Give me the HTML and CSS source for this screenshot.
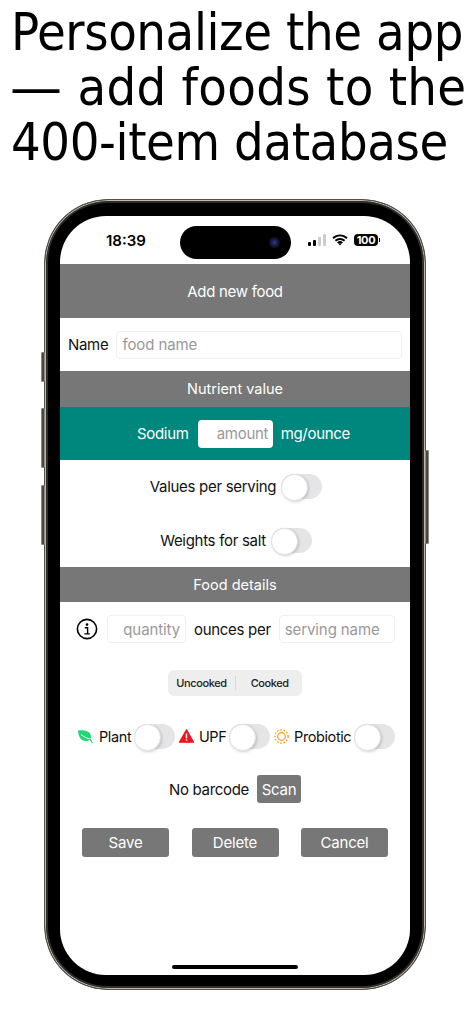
FILE: index.html
```html
<!DOCTYPE html>
<html lang="en">

<head>
  <meta charset="UTF-8">
  <meta name="viewport" content="width=device-width, initial-scale=1.0">
  <title>Add new food</title>
  <link rel="stylesheet" href="styles.css">
</head>

<body>
  <h1 class="headline">
    <div class="line line-first">Personalize the app</div>
    <div class="line line-second"><span class="dash">—</span> add foods to the</div>
    <div class="line line-third">400-item database</div>
  </h1>

  <div class="phone">
    <div class="side-btn mute"></div>
    <div class="side-btn vol-up"></div>
    <div class="side-btn vol-down"></div>
    <div class="side-btn power"></div>

    <div class="screen">
      <div class="status">
        <span class="clock">18:39</span>
        <div class="island"><span class="lens"></span></div>
        <div class="status-icons">
          <svg width="18" height="12" viewBox="0 0 18 12">
            <rect x="0" y="8" width="3" height="4" rx="1" fill="#000" />
            <rect x="5" y="6" width="3" height="6" rx="1" fill="#000" />
            <rect x="10" y="3" width="3" height="9" rx="1" fill="#ccc" />
            <rect x="15" y="0" width="3" height="12" rx="1" fill="#ccc" />
          </svg>
          <svg width="16" height="12" viewBox="0 0 16 12">
            <path d="M1 4.2a10 10 0 0 1 14 0M3.4 6.8a6.6 6.6 0 0 1 9.2 0M5.7 9a3.3 3.3 0 0 1 4.6 0" fill="none" stroke="#000" stroke-width="1.9" />
            <path d="M6.6 10l1.4-1.2 1.4 1.2L8 11.6z" fill="#000" />
          </svg>
          <div class="battery">100</div>
        </div>
      </div>

      <div class="app-title">Add new food</div>

      <div class="name-row">
        <label class="label">Name</label>
        <input class="field field-name" placeholder="food name">
      </div>

      <div class="section">Nutrient value</div>

      <div class="sodium-row">
        <span>Sodium</span>
        <input class="amount" placeholder="amount">
        <span>mg/ounce</span>
      </div>

      <div class="toggle-row">
        <span class="label">Values per serving</span>
        <span class="toggle"></span>
      </div>
      <div class="toggle-row">
        <span class="label">Weights for salt</span>
        <span class="toggle"></span>
      </div>

      <div class="section section-details">Food details</div>

      <div class="quantity-row">
        <svg class="info" width="22" height="22" viewBox="0 0 22 22">
          <circle cx="11" cy="11" r="9.6" fill="none" stroke="#000" stroke-width="1.6" />
          <circle cx="11" cy="6.6" r="1.3" fill="#000" />
          <path d="M8.8 9.7h2.8v6M8.4 15.9h5.4" fill="none" stroke="#000" stroke-width="1.4" />
        </svg>
        <input class="field field-qty" placeholder="quantity">
        <span class="label">ounces per</span>
        <input class="field field-serving" placeholder="serving name">
      </div>

      <div class="segment-row">
        <div class="segment">
          <span class="seg-item seg-first">Uncooked</span>
          <span class="seg-item seg-second">Cooked</span>
        </div>
      </div>

      <div class="flags-row">
        <svg width="17" height="15" viewBox="0 0 17 15">
          <path d="M1 1.5C6 1 12 1.5 13.5 5.5 14.5 8 14 10 13 11 9 13 4.5 12 2.8 8.5 1.8 6.5 1.2 4 1 1.5z" fill="#1fd873" />
          <path d="M4 5.5C7 8 10 9.5 14 10.2" fill="none" stroke="#fff" stroke-width="1" />
          <path d="M13 10.2L15.5 14" fill="none" stroke="#1fd873" stroke-width="1.2" />
        </svg>
        <span class="label flag-label">Plant</span>
        <span class="toggle"></span>
        <svg class="flag-icon" width="15" height="14" viewBox="0 0 15 14">
          <path d="M7.5.8L14.5 13.2H.5z" fill="#f8101c" stroke="#f8101c" stroke-width="1.2" stroke-linejoin="round" />
          <rect x="6.8" y="4.5" width="1.4" height="5" fill="#fff" />
          <rect x="6.8" y="10.3" width="1.4" height="1.5" fill="#fff" />
        </svg>
        <span class="label flag-label">UPF</span>
        <span class="toggle"></span>
        <svg class="flag-icon" width="15" height="15" viewBox="0 0 15 15">
          <circle cx="7.5" cy="7.5" r="3.8" fill="none" stroke="#f7931e" stroke-width="1.2" />
          <circle cx="7.5" cy="7.5" r="6.6" fill="none" stroke="#f7931e" stroke-width="1.3" stroke-dasharray="1.6 1.7" />
        </svg>
        <span class="label flag-label">Probiotic</span>
        <span class="toggle"></span>
      </div>

      <div class="barcode-row">
        <span class="label">No barcode</span>
        <button class="btn btn-scan">Scan</button>
      </div>

      <div class="actions">
        <button class="btn btn-action">Save</button>
        <button class="btn btn-action">Delete</button>
        <button class="btn btn-action">Cancel</button>
      </div>

      <div class="home-bar"></div>
    </div>
  </div>
</body>

</html>
```

FILE: styles.css
```css
* {
  margin: 0;
  padding: 0;
  box-sizing: border-box;
}

html,
body {
  width: 472px;
  height: 1024px;
  overflow: hidden;
  background: #fff;
}

body {
  font-family: Inter, "Liberation Sans", sans-serif;
  color: #111;
}

.headline {
  height: 199px;
  padding-top: 5px;
  font-family: "DejaVu Sans", sans-serif;
  font-stretch: condensed;
  font-weight: 400;
  font-size: 52px;
  line-height: 55px;
  color: #000;
}

.line {
  white-space: nowrap;
}

.line-first {
  padding-left: 11px;
  letter-spacing: -0.4px;
}

.line-second {
  padding-left: 10px;
  letter-spacing: 0.3px;
}

.line-third {
  padding-left: 11px;
  letter-spacing: -0.4px;
}

.dash {
  font-stretch: normal;
}

.phone {
  position: relative;
  width: 382px;
  height: 791px;
  margin-left: 44px;
  padding: 16px 15px;
  background: #000;
  border-radius: 64px;
  border: 1px solid #55524c;
  box-shadow: inset 0 0 0 1px #c0b8ac, inset 0 0 0 3px #2e2d2a;
}

.side-btn {
  position: absolute;
  width: 4px;
  background: #4a4843;
  border: 1px solid #8d877d;
  border-radius: 1px;
}

.mute {
  left: -4px;
  top: 152px;
  height: 30px;
}

.vol-up {
  left: -4px;
  top: 208px;
  height: 60px;
}

.vol-down {
  left: -4px;
  top: 285px;
  height: 60px;
}

.power {
  right: -4px;
  top: 250px;
  height: 94px;
}

.screen {
  position: relative;
  display: flex;
  flex-direction: column;
  height: 759px;
  background: #fff;
  border-radius: 46px;
  overflow: hidden;
}

.status {
  position: relative;
  flex: 0 0 48px;
}

.clock {
  position: absolute;
  left: 46px;
  top: 16px;
  font-size: 15px;
  font-weight: 600;
  line-height: 18px;
  color: #000;
}

.island {
  position: absolute;
  left: 120px;
  top: 10px;
  width: 111px;
  height: 33px;
  background: #000;
  border-radius: 17px;
}

.lens {
  position: absolute;
  right: 11px;
  top: 11px;
  width: 11px;
  height: 11px;
  border-radius: 50%;
  background: radial-gradient(circle, #2a3a8c 0%, #11122a 55%, #000 100%);
}

.status-icons {
  position: absolute;
  left: 248px;
  top: 18px;
  display: flex;
  align-items: center;
  gap: 6px;
}

.battery {
  position: relative;
  width: 24px;
  height: 12px;
  background: #000;
  border-radius: 4px;
  color: #fff;
  font-size: 11px;
  font-weight: 700;
  letter-spacing: -0.3px;
  line-height: 12px;
  text-align: center;
}

.battery::after {
  content: "";
  position: absolute;
  right: -2px;
  top: 4px;
  width: 1px;
  height: 4px;
  background: #000;
}

.app-title {
  flex: 0 0 54px;
  display: flex;
  align-items: center;
  justify-content: center;
  background: #777;
  color: #fff;
  font-size: 15px;
  letter-spacing: -0.3px;
}

.name-row {
  flex: 0 0 53px;
  display: flex;
  align-items: center;
  gap: 8px;
  padding: 0 8px;
}

.label {
  font-size: 15px;
  letter-spacing: -0.3px;
  color: #111;
  white-space: nowrap;
}

.field {
  height: 28px;
  padding: 0 5px;
  border: 1px solid #efefef;
  border-radius: 4px;
  background: #fff;
  font-family: inherit;
  font-size: 15px;
  letter-spacing: -0.1px;
  outline: none;
}

.field::placeholder,
.amount::placeholder {
  color: #999;
  opacity: 1;
}

.field-name {
  flex: 1;
  min-width: 0;
}

.section {
  flex: 0 0 36px;
  display: flex;
  align-items: center;
  justify-content: center;
  padding-bottom: 1px;
  background: #777;
  color: #fff;
  font-size: 14.5px;
}

.section-details {
  flex-basis: 35px;
}

.sodium-row {
  flex: 0 0 53px;
  display: flex;
  align-items: center;
  justify-content: center;
  gap: 7.5px;
  padding-left: 17px;
  background: #00877d;
  color: #fff;
  font-size: 15px;
  letter-spacing: -0.3px;
}

.amount {
  width: 75px;
  height: 28px;
  margin-left: 2px;
  padding: 0 5px;
  border: 0;
  border-radius: 4px;
  background: #fff;
  font-family: inherit;
  font-size: 15px;
  letter-spacing: -0.3px;
  text-align: right;
  outline: none;
}

.toggle-row {
  flex: 0 0 53.5px;
  display: flex;
  align-items: center;
  justify-content: center;
  gap: 5px;
  padding-left: 2px;
}

.toggle {
  position: relative;
  flex: none;
  display: inline-block;
  width: 41px;
  height: 25px;
  border-radius: 13px;
  background: #e5e5e7;
}

.toggle::after {
  content: "";
  position: absolute;
  left: 0;
  top: 0;
  width: 25px;
  height: 25px;
  border-radius: 50%;
  background: #fff;
  border: 1px solid #e3e3e3;
  box-shadow: 1px 1px 3px rgba(0, 0, 0, 0.18);
}

.quantity-row {
  flex: 0 0 53px;
  display: flex;
  align-items: center;
  padding: 1px 0 0 16px;
}

.info {
  flex: none;
  margin-right: 9px;
}

.field-qty {
  width: 79px;
  margin-right: 8px;
  text-align: right;
}

.field-serving {
  width: 116px;
  margin-left: 8px;
}

.segment-row {
  flex: 0 0 56px;
  display: flex;
  align-items: center;
  justify-content: center;
}

.segment {
  display: flex;
  align-items: center;
  height: 26px;
  background: #eee;
  border-radius: 6px;
  font-size: 11px;
  font-weight: 500;
  letter-spacing: -0.4px;
  color: #222;
}

.seg-item {
  display: block;
  line-height: 14px;
}

.seg-first {
  padding: 0 8px;
  border-right: 1px solid #d8d8d8;
}

.seg-second {
  padding: 0 13px 0 15px;
}

.flags-row {
  flex: 0 0 50px;
  display: flex;
  align-items: center;
  padding-left: 17px;
}

.flag-label {
  margin-left: 5px;
  margin-right: 2.7px;
  font-size: 14.5px;
  letter-spacing: -0.4px;
}

.flag-icon {
  margin-left: 4px;
}

.barcode-row {
  flex: 0 0 56px;
  display: flex;
  align-items: center;
  justify-content: center;
  gap: 8px;
}

.btn {
  border: 0;
  border-radius: 3px;
  background: #777;
  color: #fff;
  font-family: inherit;
  font-size: 15px;
  letter-spacing: -0.2px;
}

.btn-scan {
  width: 44px;
  height: 28px;
}

.actions {
  flex: 0 0 51px;
  display: flex;
  align-items: center;
  justify-content: center;
  gap: 22.5px;
}

.btn-action {
  width: 87px;
  height: 29px;
}

.home-bar {
  position: absolute;
  left: 112px;
  bottom: 6px;
  width: 126px;
  height: 4px;
  border-radius: 2px;
  background: #000;
}
```
